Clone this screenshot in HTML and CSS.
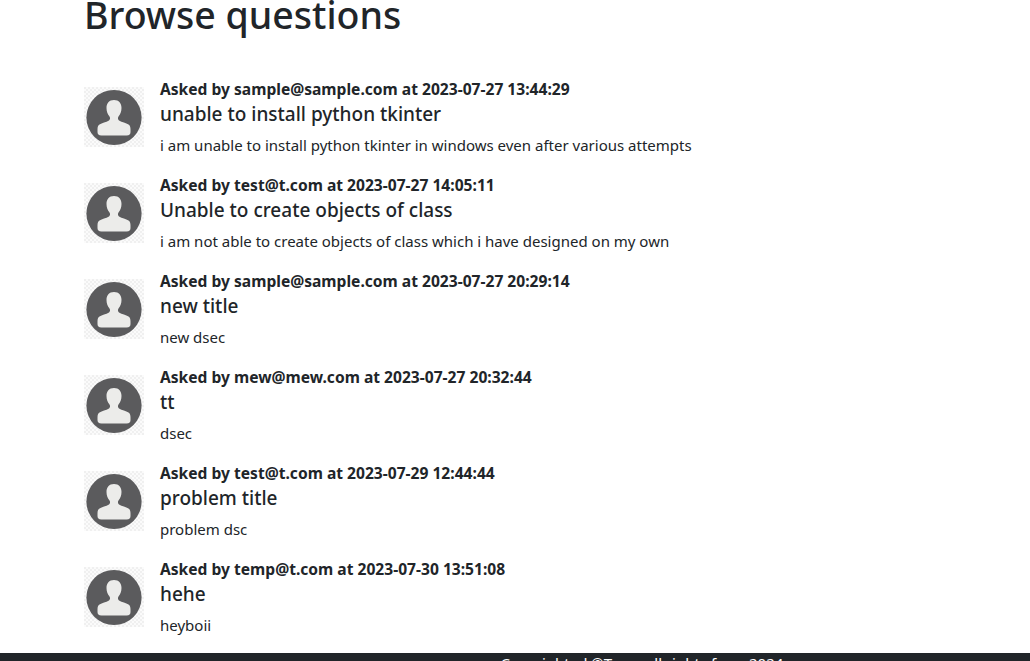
FILE: index.html
```html
<!DOCTYPE html>
<html lang="en">
<head>
    <meta charset="UTF-8">
    <meta name="viewport" content="width=device-width, initial-scale=1.0">
    <title>Browse questions</title>
    <link rel="stylesheet" href="styles.css">
</head>
<body>
    <svg class="sprite" width="0" height="0">
        <defs>
            <pattern id="checks" width="4" height="4" patternUnits="userSpaceOnUse">
                <rect width="4" height="4" fill="#fbfbfb"/>
                <rect width="2" height="2" fill="#f0f0f0"/>
                <rect x="2" y="2" width="2" height="2" fill="#f0f0f0"/>
            </pattern>
            <symbol id="avatar" viewBox="0 0 60 60">
                <rect width="60" height="60" fill="url(#checks)"/>
                <circle cx="30" cy="30.500" r="27.600" fill="#5b5b5d"/>
                <path d="M30 13c-5 0-7.500 3.500-7.500 8 0 3.500 1.200 6.500 3 8.500 .8 1 .8 3-.5 4-3 1.700-7 2.500-9.500 4-1.500 1-2 2.500-2 5v2.500c0 2 1 3.500 4 3.500h25c3 0 4-1.500 4-3.500v-2.500c0-2.500-.5-4-2-5-2.500-1.500-6.500-2.300-9.500-4-1.300-1-1.300-3-.5-4 1.800-2 3-5 3-8.500 0-4.500-2.500-8-7.500-8z" fill="#ececea"/>
            </symbol>
        </defs>
    </svg>

    <main class="container">
        <h1>Browse questions</h1>
        <div class="question-list">
            <div class="question">
                <svg class="avatar"><use href="#avatar"/></svg>
                <div class="question-body">
                    <div class="asked">Asked by sample@sample.com at 2023-07-27 13:44:29</div>
                    <h5>unable to install python tkinter</h5>
                    <p>i am unable to install python tkinter in windows even after various attempts</p>
                </div>
            </div>
            <div class="question">
                <svg class="avatar"><use href="#avatar"/></svg>
                <div class="question-body">
                    <div class="asked">Asked by test@t.com at 2023-07-27 14:05:11</div>
                    <h5>Unable to create objects of class</h5>
                    <p>i am not able to create objects of class which i have designed on my own</p>
                </div>
            </div>
            <div class="question">
                <svg class="avatar"><use href="#avatar"/></svg>
                <div class="question-body">
                    <div class="asked">Asked by sample@sample.com at 2023-07-27 20:29:14</div>
                    <h5>new title</h5>
                    <p>new dsec</p>
                </div>
            </div>
            <div class="question">
                <svg class="avatar"><use href="#avatar"/></svg>
                <div class="question-body">
                    <div class="asked">Asked by mew@mew.com at 2023-07-27 20:32:44</div>
                    <h5>tt</h5>
                    <p>dsec</p>
                </div>
            </div>
            <div class="question">
                <svg class="avatar"><use href="#avatar"/></svg>
                <div class="question-body">
                    <div class="asked">Asked by test@t.com at 2023-07-29 12:44:44</div>
                    <h5>problem title</h5>
                    <p>problem dsc</p>
                </div>
            </div>
            <div class="question">
                <svg class="avatar"><use href="#avatar"/></svg>
                <div class="question-body">
                    <div class="asked">Asked by temp@t.com at 2023-07-30 13:51:08</div>
                    <h5>hehe</h5>
                    <p>heyboii</p>
                </div>
            </div>
        </div>
    </main>

    <footer class="footer">Copyrighted ©Team all rights from 2024</footer>
</body>
</html>
```

FILE: styles.css
```css
html, body {
    height: 661px;
    overflow: hidden;
}
body {
    font-family: "Noto Sans", sans-serif;
    font-size: 15px;
    color: #212529;
    background: #fff;
    margin: 0;
}
.sprite {
    display: block;
}
.container {
    width: 862px;
    height: 653px;
    margin: 0 auto 0 84px;
    overflow: hidden;
}
h1 {
    font-size: 37.500px;
    font-weight: 500;
    line-height: 46px;
    margin: -8px 0 42px;
}
.question {
    display: flex;
    gap: 16px;
    height: 96px;
}
.avatar {
    width: 60px;
    height: 60px;
    margin-top: 7px;
    flex-shrink: 0;
}
.question-body {
    margin-top: -1px;
}
.asked {
    font-weight: 700;
    font-size: 15.600px;
    line-height: 20px;
}
h5 {
    font-size: 19px;
    font-weight: 500;
    line-height: 30px;
    margin: 0;
}
p {
    line-height: 22px;
    margin: 5px 0 0;
}
.footer {
    background: #212529;
    color: #fff;
    height: 8px;
    overflow: hidden;
    text-align: center;
    line-height: 21px;
    font-size: 15px;
    padding-left: 254px;
}
```
